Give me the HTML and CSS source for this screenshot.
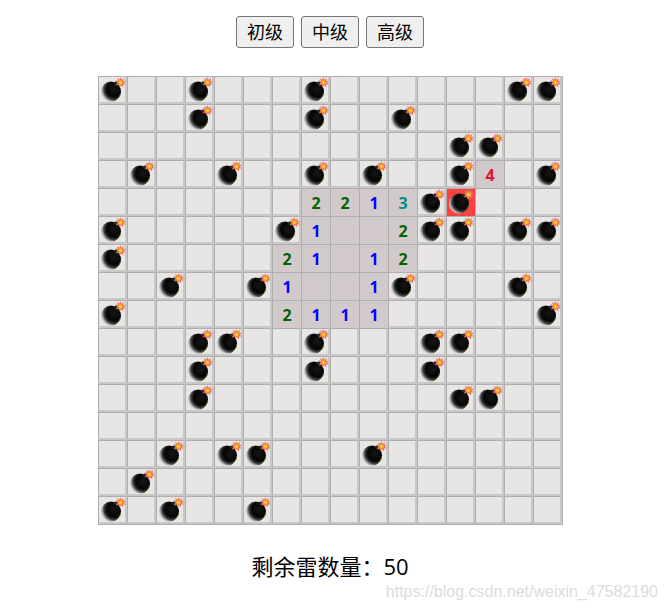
FILE: index.html
```html
<!DOCTYPE html>
<html lang="zh-CN">
<head>
    <meta charset="UTF-8">
    <meta name="viewport" content="width=device-width, initial-scale=1.0">
    <title>扫雷</title>
    <link rel="stylesheet" href="styles.css">
</head>
<body>
    <svg class="sprites" width="0" height="0" aria-hidden="true">
        <defs>
            <radialGradient id="bomb-shine" cx="0.66" cy="0.4" r="0.72">
                <stop offset="0" stop-color="#161616"/>
                <stop offset="0.52" stop-color="#050505"/>
                <stop offset="0.7" stop-color="#3a3a3a"/>
                <stop offset="0.84" stop-color="#a8a8a8"/>
                <stop offset="1" stop-color="#ececec"/>
            </radialGradient>
            <radialGradient id="spark-core">
                <stop offset="0" stop-color="#ffe14d"/>
                <stop offset="1" stop-color="#f79a10"/>
            </radialGradient>
            <symbol id="bomb" viewBox="0 0 25 25">
                <circle cx="10" cy="14.5" r="10" fill="url(#bomb-shine)"/>
                <path d="M12.5 23.9C15.8 23 18.4 20.4 19.4 17" stroke="#6e5f1e" stroke-width="1" fill="none"/>
                <path d="M12.5 6.2L15.6 3.6L18.6 7.2L15.8 9.2Z" fill="#2b2b2b"/>
                <path d="M19.5 0L20.6 2.8L22.9 1.1L22.4 3.8L25 3.9L22.9 5.6L24.8 7.6L22.1 7.5L22.2 10.3L20.1 8.5L18.2 10.5L17.8 7.8L15 8.2L16.4 5.8L14 4.2L16.8 3.7L16.2 1L18.5 2.6Z" fill="#ee7563"/>
                <circle cx="19.5" cy="5.5" r="2.4" fill="url(#spark-core)"/>
            </symbol>
        </defs>
    </svg>

    <div class="game">
        <div class="levels">
            <button class="level">初级</button>
            <button class="level">中级</button>
            <button class="level">高级</button>
        </div>
        <div id="board" class="board"></div>
        <p class="remaining">剩余雷数量&#xFF1A;<span>50</span></p>
    </div>
    <div class="watermark">https://blog.csdn.net/weixin_47582190</div>

    <script src="game.js"></script>
</body>
</html>
```
FILE: styles.css
```css
body {
    margin: 0;
    background-color: #fff;
    color: #000;
    font-family: "Open Sans", "Noto Sans CJK SC", sans-serif;
    height: 610px;
    overflow: hidden;
    position: relative;
}

.sprites {
    position: absolute;
}

.game {
    width: 660px;
    display: flex;
    flex-direction: column;
    align-items: center;
    padding-top: 16px;
}

.levels {
    display: flex;
    gap: 7px;
    margin-bottom: 28px;
}

.level {
    width: 58px;
    height: 32px;
    padding: 0 0 2px;
    font-family: "Noto Sans CJK SC", sans-serif;
    font-size: 18px;
    color: #000;
    background-color: #efefef;
    border: 1px solid #767676;
    border-radius: 3px;
}

.board {
    display: grid;
    grid-template-columns: repeat(16, 29px);
    grid-auto-rows: 28px;
    border-right: 1px solid #aeaeae;
    border-bottom: 1px solid #aeaeae;
    margin-left: 1px;
}

.cell {
    box-sizing: border-box;
    display: flex;
    align-items: center;
    justify-content: center;
    background-color: #e8e6e5;
    border-style: solid;
    border-width: 1px 2px 2px 1px;
    border-color: #aeaeae #c8c8c8 #c8c8c8 #aeaeae;
    font-family: "Open Sans", sans-serif;
    font-size: 16px;
    font-weight: 700;
}

.bomb-icon {
    flex-shrink: 0;
    width: 25px;
    height: 25px;
    margin-left: 3px;
}

.open {
    background-color: #d2caca;
    border-width: 1px 0 0 1px;
    border-color: #aeaeae;
}

.hit {
    background-color: #fb4141;
    border-right-color: #fb4141;
    border-bottom-color: #fb4141;
}

.n1 { color: #0000ff; }
.n2 { color: #006400; }
.n3 { color: #008b8b; }
.n4 { color: #dc143c; }

.remaining {
    margin: 25px 0 0;
    font-size: 22px;
    line-height: 32px;
}

.watermark {
    position: absolute;
    right: 10px;
    bottom: 9px;
    font-family: "Liberation Sans", sans-serif;
    font-size: 16px;
    line-height: 18px;
    color: #dcdcdc;
}
```
FILE: game.js
```js
// . covered, * mine, x the mine that was hit, 0 opened blank, 1-4 opened number
const rows = [
    '*..*...*......**',
    '...*...*..*.....',
    '............**..',
    '.*..*..*.*..*4.*',
    '.......2213*x...',
    '*.....*1002**.**',
    '*.....21012.....',
    '..*..*1001*...*.',
    '*.....2111.....*',
    '...**..*...**...',
    '...*...*...*....',
    '...*........**..',
    '................',
    '..*.**...*......',
    '.*..............',
    '*.*..*..........'
];

const board = document.getElementById('board');

rows.forEach(row => {
    [...row].forEach(ch => {
        const cell = document.createElement('div');
        cell.className = 'cell';
        if (ch === '*' || ch === 'x') {
            cell.innerHTML = '<svg class="bomb-icon"><use href="#bomb"/></svg>';
            if (ch === 'x') cell.classList.add('hit');
        } else if (ch !== '.') {
            cell.classList.add('open');
            if (ch !== '0') {
                cell.classList.add('n' + ch);
                cell.textContent = ch;
            }
        }
        board.appendChild(cell);
    });
});
```
